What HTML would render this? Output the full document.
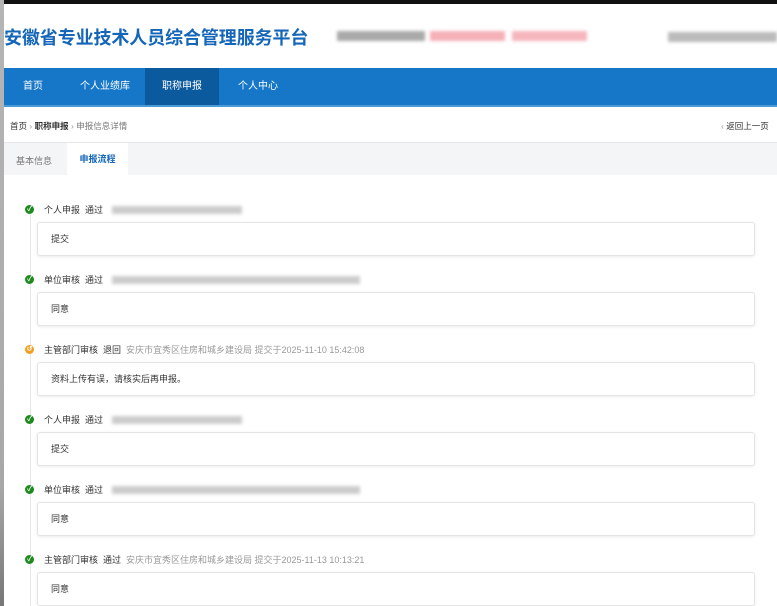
<!DOCTYPE html>
<html><head><meta charset="utf-8">
<style>
*{margin:0;padding:0;box-sizing:border-box}
body{width:777px;height:606px;overflow:hidden;background:#fff;font-family:"Liberation Sans","Noto Sans CJK SC",sans-serif;position:relative;color:#333}
.abs{position:absolute}
.strip{left:0;top:0;width:4px;height:606px;background:linear-gradient(#b5b5b5,#a8a8a8 80%,#777)}
.topline{left:4px;top:0;width:773px;height:4px;background:#111}
.title{left:4px;top:24px;font-size:18px;font-weight:bold;color:#1466b8;letter-spacing:-0.1px}
.blur{filter:blur(1.6px);height:10px}
.nav{left:4px;top:68px;width:773px;height:39px;background:#1677c8;border-bottom:2px solid #4a9ad8}
.nav span{position:absolute;top:0;height:37px;line-height:37px;color:#fff;font-size:10px}
.bc{left:4px;top:107px;width:773px;height:36px;border-bottom:1px solid #e4e6ea;font-size:8.5px}
.tabs{left:4px;top:143px;width:773px;height:32px;background:#f4f5f7;font-size:9px}
.item{position:absolute;left:25px;font-size:9px;height:10px;line-height:10px}
.dot{position:absolute;left:0;top:0;width:9px;height:9px;border-radius:50%;background:#1e8a1e;color:#fff;font-size:7px;line-height:9px;text-align:center;font-weight:bold}
.card{position:absolute;left:37px;width:718px;height:34px;border:1px solid #e4e4e4;border-radius:3px;box-shadow:0 1px 3px rgba(0,0,0,.08);background:#fff;font-size:9px;line-height:32px;padding-left:13px;color:#333}
.vline{left:30px;top:215px;width:1px;height:391px;background:#e6e6e6}
.gray{color:#999}
</style></head><body>
<div class="abs strip"></div>
<div class="abs topline"></div>
<div class="abs title">安徽省专业技术人员综合管理服务平台</div>
<div class="abs blur" style="left:337px;top:31px;width:88px;background:#aaa"></div>
<div class="abs blur" style="left:430px;top:31px;width:75px;background:#f5b0b8"></div>
<div class="abs blur" style="left:512px;top:31px;width:75px;background:#f5b5bc"></div>
<div class="abs blur" style="left:668px;top:32px;width:109px;background:#bbb"></div>
<div class="abs nav">
<span style="left:19px">首页</span>
<span style="left:76px">个人业绩库</span>
<span style="left:141px;width:74px;background:#0b5a9e;text-align:center">职称申报</span>
<span style="left:234px">个人中心</span>
</div>
<div class="abs bc">
<span class="abs" style="left:6px;top:13px;color:#333">首页 <span class="gray">›</span> <b style="font-weight:600">职称申报</b> <span class="gray">›</span> <span style="color:#777">申报信息详情</span></span>
<span class="abs" style="left:717px;top:13px;color:#333"><span class="gray">‹</span> 返回上一页</span>
</div>
<div class="abs tabs">
<span class="abs" style="left:12px;top:11px;color:#777">基本信息</span>
<span class="abs" style="left:63px;top:0;width:61px;height:32px;background:#fff;color:#1466b8;font-weight:bold;text-align:center;line-height:32px">申报流程</span>
</div>
<div class="abs vline"></div>

<div class="item" style="top:205px"><div class="dot">✓</div><span style="margin-left:19px">个人申报 &nbsp;通过</span></div>
<div class="abs blur" style="left:112px;top:206px;width:130px;background:#ccc;height:8px"></div>
<div class="card" style="top:222px">提交</div>

<div class="item" style="top:275px"><div class="dot">✓</div><span style="margin-left:19px">单位审核 &nbsp;通过</span></div>
<div class="abs blur" style="left:112px;top:276px;width:248px;background:#ccc;height:8px"></div>
<div class="card" style="top:292px">同意</div>

<div class="item" style="top:345px"><div class="dot" style="background:#f0a020">↺</div><span style="margin-left:19px">主管部门审核 &nbsp;退回 &nbsp;<span class="gray">安庆市宜秀区住房和城乡建设局 提交于2025-11-10 15:42:08</span></span></div>
<div class="card" style="top:362px">资料上传有误，请核实后再申报。</div>

<div class="item" style="top:415px"><div class="dot">✓</div><span style="margin-left:19px">个人申报 &nbsp;通过</span></div>
<div class="abs blur" style="left:112px;top:416px;width:130px;background:#ccc;height:8px"></div>
<div class="card" style="top:432px">提交</div>

<div class="item" style="top:485px"><div class="dot">✓</div><span style="margin-left:19px">单位审核 &nbsp;通过</span></div>
<div class="abs blur" style="left:112px;top:486px;width:248px;background:#ccc;height:8px"></div>
<div class="card" style="top:502px">同意</div>

<div class="item" style="top:555px"><div class="dot">✓</div><span style="margin-left:19px">主管部门审核 &nbsp;通过 &nbsp;<span class="gray">安庆市宜秀区住房和城乡建设局 提交于2025-11-13 10:13:21</span></span></div>
<div class="card" style="top:572px">同意</div>
</body></html>
